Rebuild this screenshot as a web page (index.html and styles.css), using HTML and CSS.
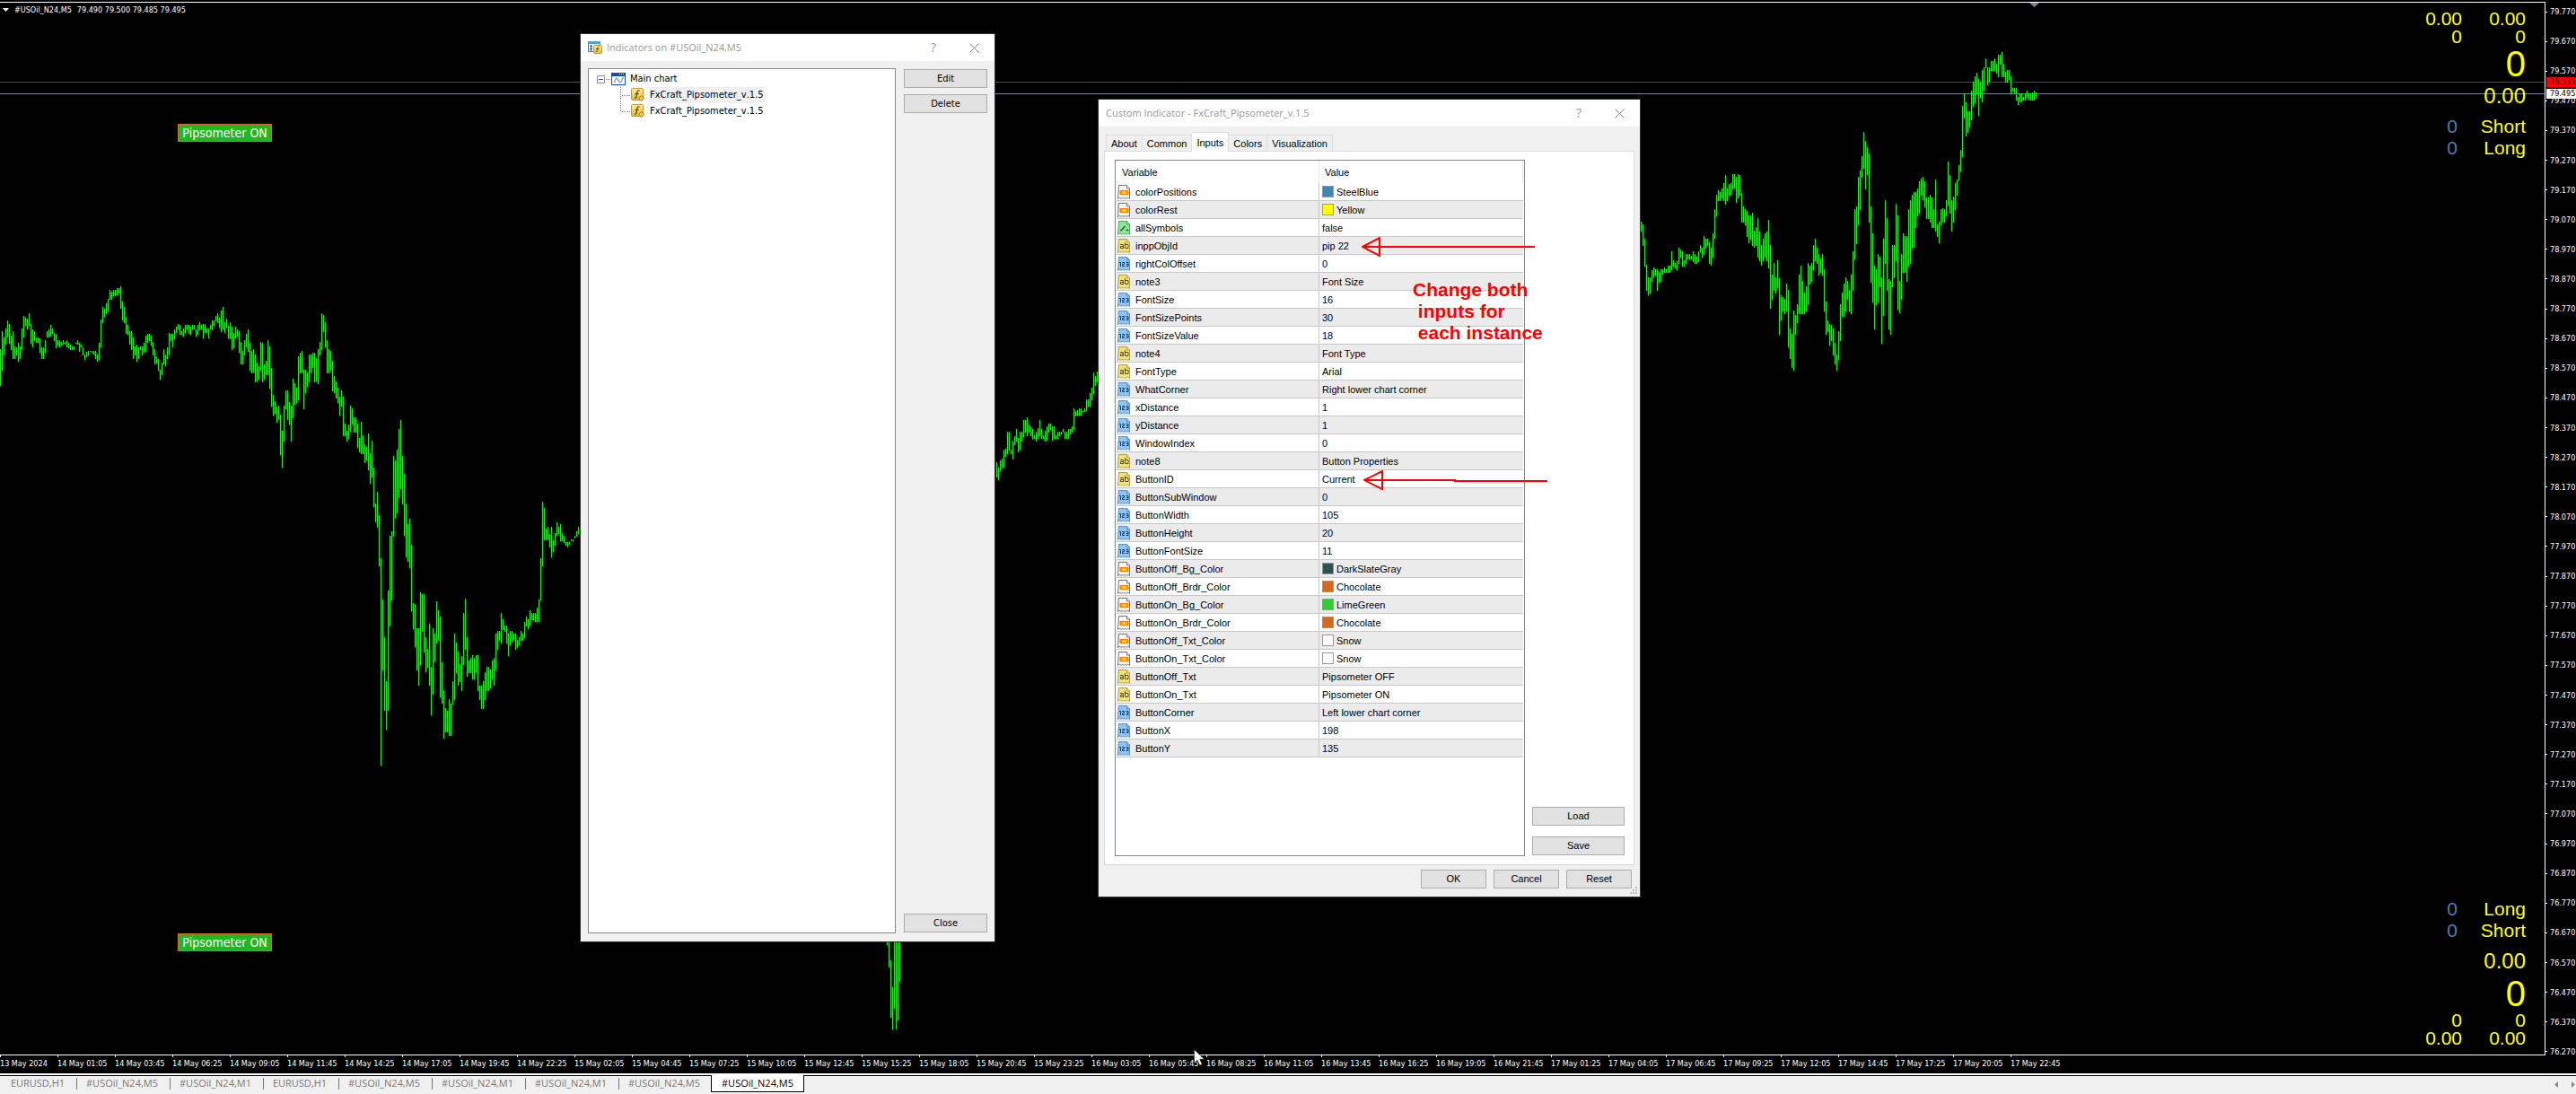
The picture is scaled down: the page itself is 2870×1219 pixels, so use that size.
FILE: index.html
```html
<!DOCTYPE html>
<html lang="en">
<head>
<meta charset="utf-8">
<title>#USOil_N24,M5</title>
<link rel="stylesheet" href="styles.css">
</head>
<body>
<svg class="sprite" aria-hidden="true">
  <defs>
    <linearGradient id="heat"><stop offset="0" stop-color="#ff7a00"/><stop offset=".5" stop-color="#ffee30"/><stop offset="1" stop-color="#ff7a00"/></linearGradient>
    <linearGradient id="gold" x2="0" y2="1"><stop offset="0" stop-color="#fdf0a0"/><stop offset="1" stop-color="#e3b93a"/></linearGradient>
  </defs>
  <symbol id="page" viewBox="0 0 16 16">
    <path d="M1.500.5h9l3 3v12l-2-1.500-1.500 1.500-1.500-1.500-1.500 1.500-1.500-1.500-1.500 1.500-1.500-1.500-2 1.500z"/>
    <path d="M10.500.5v3.500h3.500"/>
  </symbol>
  <symbol id="i-color" viewBox="0 0 16 16">
    <use href="#page" width="16" height="16" fill="#fafafa" stroke="#777"/>
    <rect x="3" y="6.500" width="9" height="4" fill="url(#heat)" stroke="#ff7a00"/>
  </symbol>
  <symbol id="i-bool" viewBox="0 0 16 16">
    <use href="#page" width="16" height="16" fill="#8fe39b" stroke="#4fae62"/>
    <path d="M3 10.500h1.500l4-4.500M9.500 10.500h3" fill="none" stroke="#14642a" stroke-width="1.500"/>
  </symbol>
  <symbol id="i-text" viewBox="0 0 16 16">
    <use href="#page" width="16" height="16" fill="#efe27f" stroke="#b5a540"/>
    <path d="M3 6.500h3.500v4.500M6.500 8.500h-3v2h3M8.500 4v6.500h3.500v-4H8.500" fill="none" stroke="#5d5212"/>
  </symbol>
  <symbol id="i-num" viewBox="0 0 16 16">
    <use href="#page" width="16" height="16" fill="#8fc3f3" stroke="#5a93c9"/>
    <path d="M2 6.500h1.500V11M5 6.500h2.500v2h-2v2H8M9.500 6.500H12v4H9.500M10 8.500h2" fill="none" stroke="#0f3f70"/>
  </symbol>
  <symbol id="i-chart" viewBox="0 0 16 14">
    <path d="M.5.5h15v13H.5z" fill="#fff" stroke="#0a4fc8"/>
    <path d="M0 0h16v4H0z" fill="#0a4fc8"/>
    <path d="M9 1.500h1M11 1.500h1M13 1.500h1" stroke="#fff"/>
    <path d="M3 11c1.500 0 1.500-5 3-5s2 5 4 5 1-5 4-5" fill="none" stroke="#7fa3ea" stroke-width="1.500"/>
  </symbol>
  <symbol id="i-func" viewBox="0 0 16 16">
    <rect x=".5" y=".5" width="13" height="13" rx="1" fill="url(#gold)" stroke="#c79a25"/>
    <path d="M9.500 3c-2-.5-2.500.5-2.800 3L6 10c-.3 1-.8 1.300-2 1M4.500 6.500h4" fill="none" stroke="#6b4d05" stroke-width="1.300"/>
    <path d="M11.500 8.500l3 3-3 3-3-3z" fill="#ecc94b" stroke="#a87b13"/>
  </symbol>
  <symbol id="i-list" viewBox="0 0 16 14">
    <path d="M.5.5h13v11H.5z" fill="#fff" stroke="#2a7fc0"/>
    <path d="M0 0h14v3H0z" fill="#4aa3dd"/>
    <path d="M2 5.500h3M3.500 4v7M2 8.500h3" stroke="#2a5f90"/>
    <rect x="6.500" y="4.500" width="9" height="9" rx="1" fill="url(#gold)" stroke="#c79a25"/>
    <path d="M12.500 6c-1.500-.3-1.700.7-2 3-.2 2-.6 2.700-1.800 2.500M9 8.500h3.500" fill="none" stroke="#6b4d05"/>
  </symbol>
  <symbol id="i-close" viewBox="0 0 11 11"><path d="M.5.5l10 10M10.500.5l-10 10" stroke="#8a8a8a"/></symbol>
</svg>

<main class="terminal">
  <section class="plot">
    <svg class="canvas" aria-hidden="true">
      <path class="level ask" d="M0 88.500H2835"/>
      <path class="level bid" d="M0 101.500H2835"/>
      <path id="bars" class="bars"/>
      <path class="shift" d="M2261 0h11l-5.500 5z"/>
    </svg>
    <h1 class="quote"><svg width="7" height="4" aria-hidden="true"><path d="M0 0h7L3.500 4z" fill="#fff"/></svg><span>#USOil_N24,M5</span><span>79.490 79.500 79.485 79.495</span></h1>
    <button class="pip pip-top">Pipsometer ON</button>
    <button class="pip pip-bottom">Pipsometer ON</button>

    <div class="readout readout-top">
      <div class="pair"><span>0.00</span><span>0.00</span></div>
      <div class="pair"><span>0</span><span>0</span></div>
      <div class="points">0</div>
      <div class="value">0.00</div>
      <div class="sides">
        <div class="side"><b>0</b><span>Short</span></div>
        <div class="side"><b>0</b><span>Long</span></div>
      </div>
    </div>
    <div class="readout readout-bottom">
      <div class="sides">
        <div class="side"><b>0</b><span>Long</span></div>
        <div class="side"><b>0</b><span>Short</span></div>
      </div>
      <div class="value">0.00</div>
      <div class="points">0</div>
      <div class="pair"><span>0</span><span>0</span></div>
      <div class="pair"><span>0.00</span><span>0.00</span></div>
    </div>
  </section>

  <aside class="prices">
    <ol class="scale">
      <li>79.770</li><li>79.670</li><li>79.570</li><li>79.470</li><li>79.370</li><li>79.270</li>
      <li>79.170</li><li>79.070</li><li>78.970</li><li>78.870</li><li>78.770</li><li>78.670</li>
      <li>78.570</li><li>78.470</li><li>78.370</li><li>78.270</li><li>78.170</li><li>78.070</li>
      <li>77.970</li><li>77.870</li><li>77.770</li><li>77.670</li><li>77.570</li><li>77.470</li>
      <li>77.370</li><li>77.270</li><li>77.170</li><li>77.070</li><li>76.970</li><li>76.870</li>
      <li>76.770</li><li>76.670</li><li>76.570</li><li>76.470</li><li>76.370</li><li>76.270</li>
    </ol>
    <span class="tag tag-ask">79.535</span>
    <span class="tag tag-bid">79.495</span>
  </aside>

  <ol class="times">
    <li>13 May 2024</li><li>14 May 01:05</li><li>14 May 03:45</li><li>14 May 06:25</li><li>14 May 09:05</li><li>14 May 11:45</li>
    <li>14 May 14:25</li><li>14 May 17:05</li><li>14 May 19:45</li><li>14 May 22:25</li><li>15 May 02:05</li><li>15 May 04:45</li>
    <li>15 May 07:25</li><li>15 May 10:05</li><li>15 May 12:45</li><li>15 May 15:25</li><li>15 May 18:05</li><li>15 May 20:45</li>
    <li>15 May 23:25</li><li>16 May 03:05</li><li>16 May 05:45</li><li>16 May 08:25</li><li>16 May 11:05</li><li>16 May 13:45</li>
    <li>16 May 16:25</li><li>16 May 19:05</li><li>16 May 21:45</li><li>17 May 01:25</li><li>17 May 04:05</li><li>17 May 06:45</li>
    <li>17 May 09:25</li><li>17 May 12:05</li><li>17 May 14:45</li><li>17 May 17:25</li><li>17 May 20:05</li><li>17 May 22:45</li>
  </ol>

  <nav class="charts" aria-label="Open charts">
    <button class="chart short">EURUSD,H1</button>
    <button class="chart">#USOil_N24,M5</button>
    <button class="chart">#USOil_N24,M1</button>
    <button class="chart short">EURUSD,H1</button>
    <button class="chart">#USOil_N24,M5</button>
    <button class="chart">#USOil_N24,M1</button>
    <button class="chart">#USOil_N24,M1</button>
    <button class="chart last">#USOil_N24,M5</button>
    <button class="chart current" aria-current="page">#USOil_N24,M5</button>
    <span class="scrollers">
      <button class="scroll" aria-label="Scroll left"><svg width="4" height="7"><path d="M4 0v7L0 3.500z" fill="#8a8a8a"/></svg></button>
      <button class="scroll" aria-label="Scroll right"><svg width="4" height="7"><path d="M0 0v7l4-3.500z" fill="#8a8a8a"/></svg></button>
    </span>
  </nav>
</main>

<section class="dialog indicators" role="dialog" aria-labelledby="indicators-title">
  <header class="titlebar">
    <svg width="16" height="14" aria-hidden="true"><use href="#i-list"/></svg>
    <h2 id="indicators-title">Indicators on #USOil_N24,M5</h2>
    <button class="glyph">?</button>
    <button class="glyph" aria-label="Close window"><svg width="11" height="11"><use href="#i-close"/></svg></button>
  </header>
  <div class="indicators-body">
    <div class="tree">
      <div class="node">
        <svg width="16" height="18" aria-hidden="true"><path d="M.5 5.500h8v8h-8z" fill="#fff" stroke="#919191"/><path d="M2 9.500h5" stroke="#2b4fa0"/><path d="M10 9.500h6" stroke="#808080" stroke-dasharray="1 1"/></svg>
        <svg width="16" height="14" aria-hidden="true"><use href="#i-chart"/></svg>
        <span class="name">Main chart</span>
      </div>
      <div class="node child">
        <svg width="12" height="18" aria-hidden="true"><path d="M.5 0v18M2 9.500h9" stroke="#808080" stroke-dasharray="1 1"/></svg>
        <svg width="16" height="16" aria-hidden="true"><use href="#i-func"/></svg>
        <span class="name selected">FxCraft_Pipsometer_v.1.5</span>
      </div>
      <div class="node child">
        <svg width="12" height="18" aria-hidden="true"><path d="M.5 0v10M2 9.500h9" stroke="#808080" stroke-dasharray="1 1"/></svg>
        <svg width="16" height="16" aria-hidden="true"><use href="#i-func"/></svg>
        <span class="name">FxCraft_Pipsometer_v.1.5</span>
      </div>
    </div>
    <div class="actions">
      <button class="btn">Edit</button>
      <button class="btn">Delete</button>
      <button class="btn close">Close</button>
    </div>
  </div>
</section>

<section class="dialog custom" role="dialog" aria-labelledby="custom-title">
  <header class="titlebar">
    <h2 id="custom-title">Custom Indicator - FxCraft_Pipsometer_v.1.5</h2>
    <button class="glyph">?</button>
    <button class="glyph" aria-label="Close window"><svg width="11" height="11"><use href="#i-close"/></svg></button>
  </header>
  <div class="tabs" role="tablist">
    <button class="tab" role="tab">About</button>
    <button class="tab" role="tab">Common</button>
    <button class="tab active" role="tab" aria-selected="true">Inputs</button>
    <button class="tab" role="tab">Colors</button>
    <button class="tab" role="tab">Visualization</button>
  </div>
  <div class="pane" role="tabpanel">
    <div class="grid-box">
      <table class="inputs">
        <thead><tr><th>Variable</th><th>Value</th></tr></thead>
        <tbody>
          <tr><td><svg class="ico"><use href="#i-color"/></svg>colorPositions</td><td><i class="swatch steel"></i>SteelBlue</td></tr>
          <tr><td><svg class="ico"><use href="#i-color"/></svg>colorRest</td><td><i class="swatch yellow"></i>Yellow</td></tr>
          <tr><td><svg class="ico"><use href="#i-bool"/></svg>allSymbols</td><td>false</td></tr>
          <tr><td><svg class="ico"><use href="#i-text"/></svg>inppObjId</td><td>pip 22</td></tr>
          <tr><td><svg class="ico"><use href="#i-num"/></svg>rightColOffset</td><td>0</td></tr>
          <tr><td><svg class="ico"><use href="#i-text"/></svg>note3</td><td>Font Size</td></tr>
          <tr><td><svg class="ico"><use href="#i-num"/></svg>FontSize</td><td>16</td></tr>
          <tr><td><svg class="ico"><use href="#i-num"/></svg>FontSizePoints</td><td>30</td></tr>
          <tr><td><svg class="ico"><use href="#i-num"/></svg>FontSizeValue</td><td>18</td></tr>
          <tr><td><svg class="ico"><use href="#i-text"/></svg>note4</td><td>Font Type</td></tr>
          <tr><td><svg class="ico"><use href="#i-text"/></svg>FontType</td><td>Arial</td></tr>
          <tr><td><svg class="ico"><use href="#i-num"/></svg>WhatCorner</td><td>Right lower chart corner</td></tr>
          <tr><td><svg class="ico"><use href="#i-num"/></svg>xDistance</td><td>1</td></tr>
          <tr><td><svg class="ico"><use href="#i-num"/></svg>yDistance</td><td>1</td></tr>
          <tr><td><svg class="ico"><use href="#i-num"/></svg>WindowIndex</td><td>0</td></tr>
          <tr><td><svg class="ico"><use href="#i-text"/></svg>note8</td><td>Button Properties</td></tr>
          <tr><td><svg class="ico"><use href="#i-text"/></svg>ButtonID</td><td>Current</td></tr>
          <tr><td><svg class="ico"><use href="#i-num"/></svg>ButtonSubWindow</td><td>0</td></tr>
          <tr><td><svg class="ico"><use href="#i-num"/></svg>ButtonWidth</td><td>105</td></tr>
          <tr><td><svg class="ico"><use href="#i-num"/></svg>ButtonHeight</td><td>20</td></tr>
          <tr><td><svg class="ico"><use href="#i-num"/></svg>ButtonFontSize</td><td>11</td></tr>
          <tr><td><svg class="ico"><use href="#i-color"/></svg>ButtonOff_Bg_Color</td><td><i class="swatch slate"></i>DarkSlateGray</td></tr>
          <tr><td><svg class="ico"><use href="#i-color"/></svg>ButtonOff_Brdr_Color</td><td><i class="swatch choc"></i>Chocolate</td></tr>
          <tr><td><svg class="ico"><use href="#i-color"/></svg>ButtonOn_Bg_Color</td><td><i class="swatch lime"></i>LimeGreen</td></tr>
          <tr><td><svg class="ico"><use href="#i-color"/></svg>ButtonOn_Brdr_Color</td><td><i class="swatch choc"></i>Chocolate</td></tr>
          <tr><td><svg class="ico"><use href="#i-color"/></svg>ButtonOff_Txt_Color</td><td><i class="swatch snow"></i>Snow</td></tr>
          <tr><td><svg class="ico"><use href="#i-color"/></svg>ButtonOn_Txt_Color</td><td><i class="swatch snow"></i>Snow</td></tr>
          <tr><td><svg class="ico"><use href="#i-text"/></svg>ButtonOff_Txt</td><td>Pipsometer OFF</td></tr>
          <tr><td><svg class="ico"><use href="#i-text"/></svg>ButtonOn_Txt</td><td>Pipsometer ON</td></tr>
          <tr><td><svg class="ico"><use href="#i-num"/></svg>ButtonCorner</td><td>Left lower chart corner</td></tr>
          <tr><td><svg class="ico"><use href="#i-num"/></svg>ButtonX</td><td>198</td></tr>
          <tr><td><svg class="ico"><use href="#i-num"/></svg>ButtonY</td><td>135</td></tr>
        </tbody>
      </table>
    </div>
    <div class="presets">
      <button class="btn">Load</button>
      <button class="btn">Save</button>
    </div>
  </div>
  <footer class="confirm">
    <button class="btn">OK</button>
    <button class="btn">Cancel</button>
    <button class="btn">Reset</button>
  </footer>
  <svg class="grip" width="8" height="8" aria-hidden="true"><path d="M6 0h2v2H6zM3 3h2v2H3zM6 3h2v2H6zM0 6h2v2H0zM3 6h2v2H3zM6 6h2v2H6z" fill="#bdbdbd"/></svg>
</section>

<svg class="arrow arrow-one" width="194" height="22" aria-hidden="true"><path d="M1 11H193M1 11L20 1V21z"/></svg>
<svg class="arrow arrow-two" width="206" height="22" aria-hidden="true"><path d="M1 11H102V12H205M1 11L21 1V21z"/></svg>
<p class="note">Change both
 inputs for
 each instance</p>
<svg class="cursor" width="13" height="19" aria-hidden="true"><path d="M.5.5v15l3.500-3.300 2.700 5.800 2.600-1.200-2.600-5.500h5z" fill="#fff" stroke="#000" stroke-width=".5"/></svg>
<script src="bars.js"></script>
</body>
</html>
```
FILE: styles.css
```css
* { box-sizing: border-box; }

body {
  margin: 0;
  background: #000;
  color: #000;
  font: 11px/18px "DejaVu Sans Condensed", "Noto Sans", sans-serif;
  font-kerning: none;
  position: relative;
  overflow: hidden;
}

ol { list-style: none; margin: 0; padding: 0; }
h1, h2, p { margin: 0; font-weight: normal; }
button { font: inherit; font-kerning: none; color: inherit; padding: 0; border: 0; background: none; }
svg { display: block; flex: none; }
.sprite { position: absolute; width: 0; height: 0; }

/* chart window */
.terminal {
  display: grid;
  grid-template-columns: minmax(0, 1fr) 34px;
  grid-template-rows: minmax(0, 1fr) 20px auto;
  height: 100vh;
  padding-top: 2px;
}

.plot {
  position: relative;
  border: 1px solid #fff;
  border-left: 0;
  overflow: hidden;
}

.canvas { position: absolute; inset: 0; width: 100%; height: 100%; }
.level { stroke-width: 1; }
.ask { stroke: #f00; }
.bid { stroke: #778899; }
.bars { stroke: #0f0; fill: none; shape-rendering: crispEdges; }
.shift { fill: #778899; }

.quote {
  position: absolute;
  top: 2px;
  left: 3px;
  display: flex;
  align-items: center;
  gap: 6px;
  color: #fff;
  font-size: 9px;
  line-height: 12px;
}

.pip {
  position: absolute;
  left: 198px;
  width: 105px;
  height: 20px;
  border: 1px solid #d2691e;
  background: #20b820;
  color: #fffafa;
  font-size: 14px;
  line-height: 18px;
  white-space: nowrap;
}
.pip-top { top: 135px; }
.pip-bottom { bottom: 115px; }

.readout {
  position: absolute;
  right: 21px;
  color: #ff0;
  font: 21px/20px "Liberation Sans", Arial, sans-serif;
  text-align: right;
}
.readout-top { top: 8px; }
.readout-bottom { bottom: 8px; }
.pair, .side { display: grid; grid-template-columns: auto 71px; }
.points { font-size: 40px; line-height: 40px; }
.value { font-size: 24px; line-height: 32px; }
.side { line-height: 24px; }
.side b { font-weight: normal; color: #4682b4; padding-right: 5px; }
.readout-top .sides { padding-top: 6px; }
.readout-bottom .sides { padding-bottom: 6px; }

.prices {
  position: relative;
  grid-row: span 2;
  color: #fff;
  font-size: 9px;
  line-height: 12px;
}
.scale {
  display: flex;
  flex-direction: column;
  justify-content: space-between;
  height: 100%;
  padding: 5px 0 18px;
}
.scale li { display: flex; align-items: center; gap: 3px; }
.scale li::before { content: ""; width: 2px; height: 1px; background: #fff; }
.tag { position: absolute; left: 1px; right: 0; padding-left: 4px; height: 11px; line-height: 11px; color: #000; }
.tag-ask { top: 84px; background: #f00; }
.tag-bid { top: 97px; background: #fff; }

.times {
  display: flex;
  color: #fff;
  font-size: 9px;
  line-height: 14px;
  white-space: nowrap;
  overflow: hidden;
}
.times li { flex: 0 0 64px; }
.times li::before { content: ""; display: block; width: 1px; height: 2px; background: #fff; }

.charts {
  grid-column: span 2;
  display: flex;
  height: 23px;
  border-top: 2px solid #fff;
  background: linear-gradient(#000 1px, #f0f0f0 1px);
  color: #777;
  font: 11px/18px "Open Sans", sans-serif;
}
.chart { position: relative; width: 104px; height: 18px; white-space: nowrap; }
.chart.short { width: 84px; }
.chart::after { content: ""; position: absolute; right: -2px; top: 3px; height: 13px; width: 1px; background: #777; }
.chart.last::after, .chart.current::after { display: none; }
.chart.current { height: 19px; border: 1px solid #000; border-top: 0; background: #fff; color: #000; }
.scrollers { display: flex; align-items: center; gap: 15px; margin-left: auto; padding-right: 1px; }

/* dialogs */
.dialog {
  position: absolute;
  display: flex;
  flex-direction: column;
  border: 1px solid #333;
  background: #f0f0f0;
}
.titlebar {
  display: flex;
  align-items: center;
  gap: 5px;
  height: 30px;
  padding-left: 8px;
  background: #fff;
  color: #999;
  font: 11px/30px "Open Sans", sans-serif;
}
.titlebar h2 { flex: 1; font: inherit; }
.glyph { width: 40px; display: grid; place-items: center; font-size: 14px; line-height: 28px; }
.titlebar .glyph:last-child { margin-right: 3px; }

.btn {
  height: 21px;
  border: 1px solid #adadad;
  background: #e1e1e1;
  line-height: 19px;
}

.indicators { left: 646px; top: 37px; width: 463px; height: 1013px; }
.indicators-body { flex: 1; display: flex; gap: 9px; padding: 8px 8px 9px 8px; }
.tree { flex: 1; border: 1px solid #828790; background: #fff; padding: 2px 9px; }
.node { display: flex; align-items: center; height: 18px; }
.node .name { margin-left: 4px; padding: 0 1px; }
.child { padding-left: 26px; }
.selected { background: #f0f0f0; }
.actions { width: 93px; display: flex; flex-direction: column; gap: 7px; padding: 1px 0; }
.close { margin-top: auto; }

.custom { left: 1223px; top: 110px; width: 605px; height: 890px; font: 11px/19px "Liberation Sans", Arial, sans-serif; }
.tabs { display: flex; align-items: flex-end; height: 28px; padding-left: 8px; margin-bottom: -1px; position: relative; }
.tab { height: 19px; padding: 0 5px; border: 1px solid #dcdcdc; border-width: 1px 1px 0 0; line-height: 18px; }
.tab:first-child { border-left-width: 1px; }
.tab.active { height: 22px; background: #fff; }
.pane {
  flex: 1;
  display: flex;
  gap: 8px;
  margin: 0 6px 0 6px;
  padding: 9px 10px 9px 11px;
  border: 1px solid #dcdcdc;
  background: #fff;
}
.grid-box { flex: 1; border: 1px solid #828790; padding: 0 1px; }
.inputs { width: 100%; border-collapse: separate; border-spacing: 0; table-layout: fixed; }
.inputs th { height: 25px; padding: 1px 6px 0; text-align: left; font-weight: normal; border-right: 1px solid #e5e5e5; }
.inputs th:first-child { width: 226px; }
.inputs td { height: 20px; padding: 2px 3px 0; line-height: 17px; border-bottom: 1px solid #c8c8c8; white-space: nowrap; }
.inputs td:first-child { padding: 2px 1px 0; border-right: 1px solid #c8c8c8; }
.inputs tr:nth-child(even) td { background: #ebebeb; }
.ico { float: left; width: 16px; height: 16px; margin-right: 4px; }
.swatch { float: left; width: 13px; height: 13px; margin: 1px 3px 0 0; border: 1px solid #999; }
.steel { background: #4682b4; }
.yellow { background: #ff0; }
.slate { background: #2f4f4f; }
.choc { background: #d2691e; }
.lime { background: #32cd32; }
.snow { background: #fffafa; }

.presets { width: 103px; display: flex; flex-direction: column; justify-content: flex-end; gap: 12px; padding-bottom: 1px; }
.confirm { display: flex; justify-content: flex-end; gap: 8px; padding: 5px 9px 9px; }
.confirm .btn { width: 73px; }
.grip { position: absolute; right: 3px; bottom: 3px; }

/* markup drawn over the windows */
.arrow { position: absolute; fill: none; stroke: #f00; stroke-width: 2; }
.arrow-one { left: 1517px; top: 264px; }
.arrow-two { left: 1519px; top: 524px; }
.note {
  position: absolute;
  left: 1574px;
  top: 311px;
  color: #f00;
  font: bold 21px/24px "Liberation Sans", Arial, sans-serif;
  white-space: pre;
}
.cursor { position: absolute; left: 1330px; top: 1169px; }
```
FILE: bars.js
```js
// High/low pairs per session; each bar is 2px after the previous one.
// y is the session's base line, unit the number of steps per pixel.
const sessions = [
  { x: 0, y: -3, unit: 2.529, bars: [
    983,1087,933,1044,952,1001,926,970,902,952,912,968,946,986,932,1012,976,1012,978,1001,
    965,1019,976,1011,926,986,890,952,895,918,899,928,882,918,912,968,928,979,933,961,
    950,966,950,966,953,994,978,1012,978,1012,958,994,932,952,927,952,915,948,926,942,
    937,961,941,981,958,974,959,979,963,974,958,970,963,969,958,979,966,980,970,987,
    975,987,975,987,965,969,958,970,965,991,970,979,978,1001,998,1014,991,1007,990,1001,
    988,991,990,994,988,999,988,1012,998,1019,965,1014,900,979,866,910,870,893,854,885,
    842,878,818,845,823,845,817,835,818,835,812,832,811,827,806,870,849,903,866,910,
    894,941,915,943,932,970,932,987,952,1012,975,1001,970,1019,978,1012,975,987,975,1001,
    966,994,945,991,940,966,940,962,945,974,963,1001,983,1027,1003,1024,1011,1044,1042,1070,
    1021,1057,983,1027,998,1032,978,1012,937,999,940,962,940,979,927,957,920,937,912,928,
    915,943,932,943,925,948,915,937,915,928,915,941,920,943,915,928,915,928,927,948,
    915,943,907,930,915,928,912,953,912,937,925,937,925,953,915,928,902,930,902,918,
    889,905,882,910,895,923,874,936,866,928,907,937,899,923,918,953,907,957,920,987,
    937,981,920,953,928,948,932,994,963,1028,990,1028,958,1001,940,979,927,991,966,1044,
    990,1052,983,1050,998,1077,1021,1075,1033,1070,963,1044,965,1077,1028,1070,1016,1057,958,1057,
    975,1095,1037,1146,1113,1171,1130,1166,1146,1191,1143,1184,1168,1282,1214,1318,1143,1244,1100,1153,
    1100,1184,1133,1196,1143,1244,1067,1179,1080,1141,1092,1136,1004,1128,995,1052,990,1050,1042,1153,
    1042,1108,1050,1090,998,1077,998,1052,995,1037,995,1077,1008,1075,983,1082,963,1001,882,987,
    888,936,907,979,958,1052,983,1052,990,1044,1016,1103,1060,1108,1075,1122,1092,1136,1117,1171,
    1100,1146,1117,1229,1193,1229,1214,1244,1196,1237,1143,1216,1150,1196,1176,1219,1176,1219,1193,1262,
    1234,1275,1189,1280,1227,1280,1252,1305,1259,1297,1222,1325,1277,1363,1242,1345,1317,1429,1419,1472,
    1386,1487,1452,1596 ] },
  { x: 424, y: 557, unit: 2.379, bars: [
    148,696,257,445,357,553,473,602,233,553,88,328,76,259,-124,90,-112,43,-140,29,
    -195,-12,-219,-36,-124,5,-76,88,2,146,57,157,44,174,112,288,266,335,269,383,
    333,445,333,486,238,431,243,343,243,397,357,450,388,438,321,486,435,564,333,509,
    347,421,262,374,286,366,302,516,424,533,497,626,545,610,552,610,521,619,533,619,
    473,535,347,523,371,452,395,486,428,476,407,500,293,431,255,390,357,462,419,452,
    412,452,404,469,412,469,404,452,404,500,485,523,485,547,473,547,450,523,435,500,
    435,500,443,493,419,469,412,485,347,445,340,390,340,366,293,374,309,338,326,343,
    326,374,345,407,340,378,340,371,347,366,347,390,364,385,357,378,340,366,347,366,
    316,359,302,328,309,335,286,328,293,312,293,312,293,316,278,316,257,316,148,259,
    -2,168,14,100,69,100,64,100,83,119,64,145,100,131,81,114,52,88,64,83,
    57,102,81,102,88,107,105,114,105,119,105,112,98,102,98,102,88,95,76,90,
    64,83,64,83 ] },
  { x: 988, y: 957, unit: 3, bars: [
    240,279,240,354,330,522,420,561,240,492,200,561,200,531,200,402 ] },
  { x: 1108, y: 397, unit: 3, bars: [
    354,434,345,396,363,405,339,375,333,366,303,363,300,327,243,318,243,306,303,318,
    273,336,258,288,234,276,264,312,243,306,243,276,204,261,204,246,195,258,219,246,
    225,258,234,267,255,267,243,276,231,267,204,258,234,267,255,267,240,276,225,273,
    216,246,216,237,225,273,225,267,255,267,243,267,243,258,243,252,234,246,243,267,
    243,267,234,267,234,252,225,246,165,237,174,192,171,189,165,189,165,189,174,177,
    165,177,135,174,135,159,114,159,96,138,45,117,57,90,42,78 ] },
  { x: 1828, y: -3, unit: 3, bars: [
    741,774,750,822,798,891,885,972,927,987,927,981,903,942,894,927,900,921,900,972,
    909,945,900,942,900,918,894,912,900,912,888,912,888,912,840,903,870,891,879,897,
    873,903,828,882,834,861,840,891,870,891,849,882,849,867,849,867,855,867,840,876,
    849,882,858,882,840,876,819,843,828,861,789,852,798,831,798,822,810,882,828,888,
    780,861,699,798,651,723,636,672,642,672,630,663,612,672,585,684,630,672,615,654,
    612,654,582,633,582,630,591,678,582,663,585,654,645,744,690,744,699,753,705,792,
    720,813,720,801,711,822,771,828,759,822,729,861,774,873,819,888,798,873,780,861,
    774,873,735,897,819,1032,918,1002,879,972,927,981,870,963,930,1119,987,1071,993,1041,
    999,1050,948,1041,969,1161,1098,1200,1116,1230,1038,1239,1053,1119,1017,1080,918,1050,888,1050,
    939,1050,978,1050,957,1041,879,1020,888,951,879,942,819,903,798,873,828,882,849,921,
    864,912,849,921,900,1041,1008,1119,1071,1110,1083,1155,1086,1140,1098,1188,1146,1218,1185,1239,
    1107,1203,1017,1140,978,1059,948,1059,927,1041,939,1002,969,1041,918,1050,840,972,699,867,
    690,816,591,753,570,702,522,594,441,564,471,633,492,585,513,744,690,945,780,1011,
    888,1101,900,1020,849,1011,858,960,927,1149,798,1056,669,882,729,972,933,1101,939,1119,
    819,960,819,930,681,873,720,1035,939,1047,849,1002,780,912,789,912,789,942,699,891,
    669,882,651,831,642,828,642,762,630,723,606,714,597,654,591,669,606,693,660,732,
    660,732,651,744,660,762,699,762,600,774,750,792,741,813,699,753,696,744,699,744,
    669,723,540,687,585,714,669,774,657,744,612,702,600,654,552,603,501,573,354,525,
    312,396,342,456,372,444,372,426,303,402,273,357,255,345,243,315,264,387,273,327,
    234,342,225,306,195,228,225,285,225,276,204,237,204,237,195,237,213,246,183,258,
    183,216,174,258,213,258,240,276,234,276,234,267,255,315,294,306,294,312,294,336,
    324,351,312,342,312,342,324,336,312,336,303,327,312,336,312,336,309,336,303,336,
    309,327 ] },
];

let d = "";
for (const { x, y, unit, bars } of sessions) {
  for (let i = 0; i < bars.length; i += 2) {
    const high = Math.round(y + bars[i] / unit);
    const low = Math.max(high + 1, Math.round(y + bars[i + 1] / unit));
    d += `M${x + i}.5 ${high}V${low}`;
  }
}
document.getElementById("bars").setAttribute("d", d);
```
